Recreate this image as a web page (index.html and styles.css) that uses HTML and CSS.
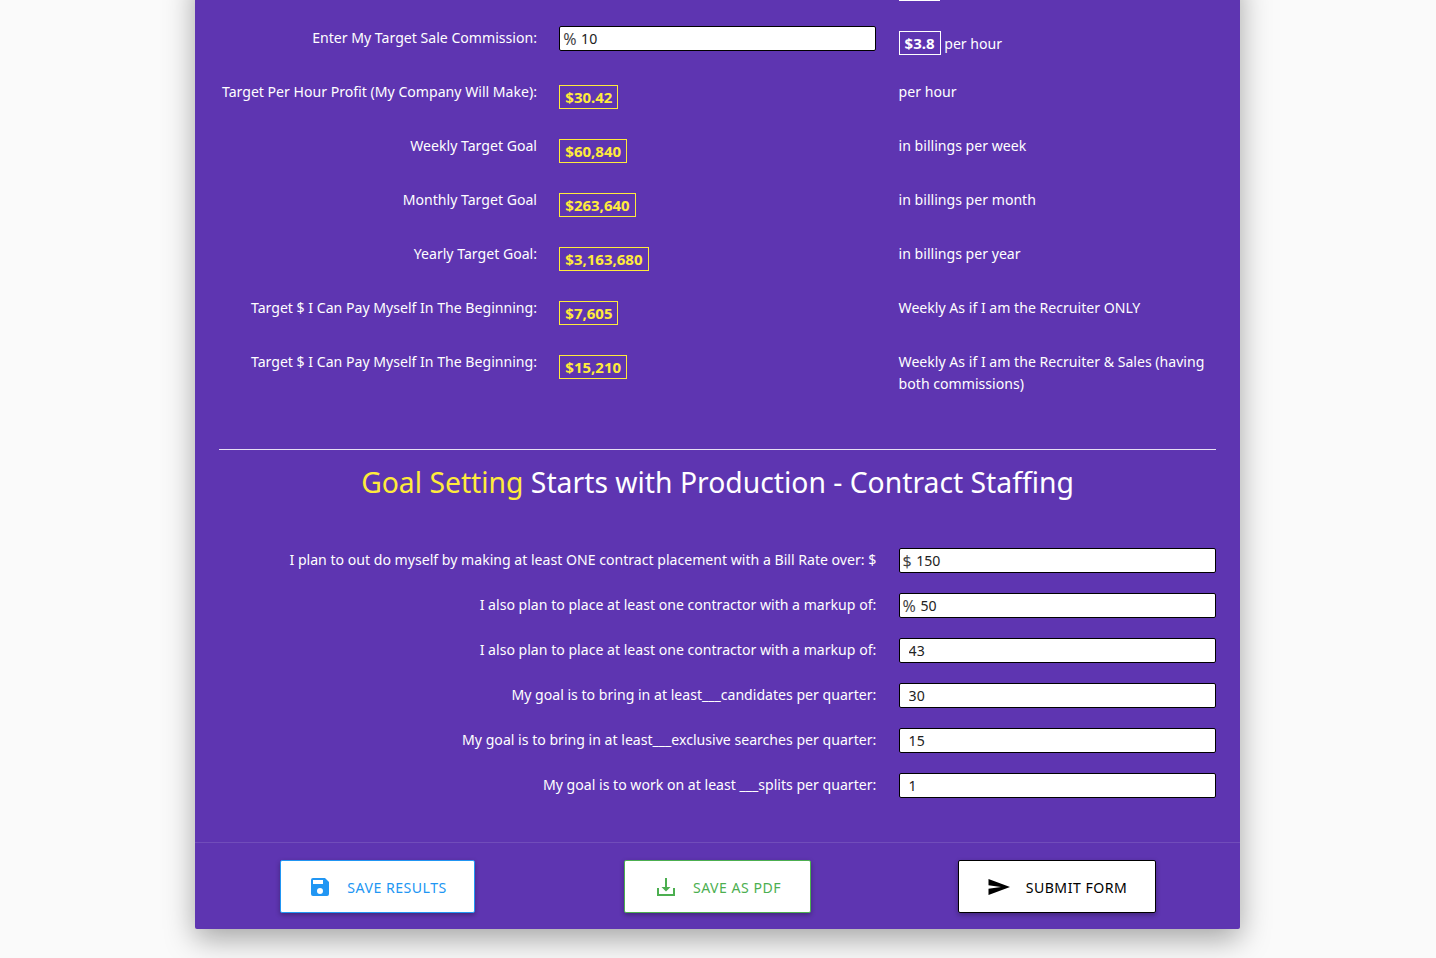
FILE: index.html
```html
<!DOCTYPE html>
<html lang="en">
<head>
    <meta charset="UTF-8">
    <meta name="viewport" content="width=device-width, initial-scale=1.0">
    <title>Goal Setting</title>
    <link rel="stylesheet" href="styles.css">
</head>

<body>
    <div class="card">
        <div class="card-body">
            <div class="grid-row">
                <div class="row-label"></div>
                <div class="row-field"></div>
                <div class="row-note"><span class="value-box white stub"></span></div>
            </div>
            <div class="grid-row">
                <label class="row-label">Enter My Target Sale Commission:</label>
                <div class="input-wrap"><span class="prefix">%</span><input type="text" value="10"></div>
                <div class="row-note"><span class="value-box white">$3.8</span> per hour</div>
            </div>
            <div class="grid-row">
                <label class="row-label">Target Per Hour Profit (My Company Will Make):</label>
                <div class="row-field"><span class="value-box">$30.42</span></div>
                <div class="row-note">per hour</div>
            </div>
            <div class="grid-row">
                <label class="row-label">Weekly Target Goal</label>
                <div class="row-field"><span class="value-box">$60,840</span></div>
                <div class="row-note">in billings per week</div>
            </div>
            <div class="grid-row">
                <label class="row-label">Monthly Target Goal</label>
                <div class="row-field"><span class="value-box">$263,640</span></div>
                <div class="row-note">in billings per month</div>
            </div>
            <div class="grid-row">
                <label class="row-label">Yearly Target Goal:</label>
                <div class="row-field"><span class="value-box">$3,163,680</span></div>
                <div class="row-note">in billings per year</div>
            </div>
            <div class="grid-row">
                <label class="row-label">Target $ I Can Pay Myself In The Beginning:</label>
                <div class="row-field"><span class="value-box">$7,605</span></div>
                <div class="row-note">Weekly As if I am the Recruiter ONLY</div>
            </div>
            <div class="grid-row">
                <label class="row-label">Target $ I Can Pay Myself In The Beginning:</label>
                <div class="row-field"><span class="value-box">$15,210</span></div>
                <div class="row-note">Weekly As if I am the Recruiter &amp; Sales (having both commissions)</div>
            </div>

            <hr class="divider">
            <h2 class="section-title"><span class="accent">Goal Setting</span> Starts with Production - Contract Staffing</h2>

            <div class="goal-rows">
                <div class="goal-row">
                    <label class="goal-label">I plan to out do myself by making at least ONE contract placement with a Bill Rate over: $</label>
                    <div class="input-wrap"><span class="prefix">$</span><input type="text" value="150"></div>
                </div>
                <div class="goal-row">
                    <label class="goal-label">I also plan to place at least one contractor with a markup of:</label>
                    <div class="input-wrap"><span class="prefix">%</span><input type="text" value="50"></div>
                </div>
                <div class="goal-row">
                    <label class="goal-label">I also plan to place at least one contractor with a markup of:</label>
                    <div class="input-wrap no-prefix"><input type="text" value="43"></div>
                </div>
                <div class="goal-row">
                    <label class="goal-label">My goal is to bring in at least___candidates per quarter:</label>
                    <div class="input-wrap no-prefix"><input type="text" value="30"></div>
                </div>
                <div class="goal-row">
                    <label class="goal-label">My goal is to bring in at least___exclusive searches per quarter:</label>
                    <div class="input-wrap no-prefix"><input type="text" value="15"></div>
                </div>
                <div class="goal-row">
                    <label class="goal-label">My goal is to work on at least ___splits per quarter:</label>
                    <div class="input-wrap no-prefix"><input type="text" value="1"></div>
                </div>
            </div>
        </div>

        <div class="card-actions">
            <button class="action-btn blue">
                <svg viewBox="0 0 24 24" width="24" height="24"><path fill="currentColor" d="M17 3H5a2 2 0 0 0-2 2v14a2 2 0 0 0 2 2h14a2 2 0 0 0 2-2V7l-4-4zm-5 16a3 3 0 1 1 0-6 3 3 0 0 1 0 6zm3-10H5V5h10v4z"/></svg>
                <span>Save Results</span>
            </button>
            <button class="action-btn green">
                <svg viewBox="0 0 24 24" width="24" height="24"><path fill="currentColor" d="M11 3h2v9h3.500L12 16.500 7.500 12H11V3zM3 13h2v6h14v-6h2v8H3v-8z"/></svg>
                <span>Save as PDF</span>
            </button>
            <button class="action-btn dark">
                <svg viewBox="0 0 24 24" width="24" height="24"><path fill="currentColor" d="M1.500 4 23 12 1.500 20v-6.200L14 12 1.500 10.200V4z"/></svg>
                <span>Submit Form</span>
            </button>
        </div>
    </div>
</body>
</html>
```
FILE: styles.css
```css
* {
    margin: 0;
    padding: 0;
    box-sizing: border-box;
}

body {
    font-family: 'Noto Sans', 'Open Sans', sans-serif;
    font-size: 14.1px;
    line-height: 22px;
    height: 100vh;
    overflow: hidden;
    display: flex;
    flex-direction: column;
    justify-content: flex-end;
    padding: 0 196px 29px 195px;
    background: #fafafa;
    color: #ffffff;
}

.card {
    flex-shrink: 0;
    background: #5e35b1;
    border-radius: 2px;
    box-shadow: 0 10px 30px rgba(0, 0, 0, 0.35);
}

.card-body {
    padding: 0 24px 44px;
}

.grid-row,
.goal-row {
    display: grid;
    grid-template-columns: 318px 317px 1fr;
    column-gap: 22.3px;
}

.grid-row {
    padding-bottom: 25px;
    align-items: start;
}

.row-label,
.goal-label {
    text-align: right;
}

.row-label,
.row-note {
    padding-top: 1px;
}

.row-field {
    padding-top: 5px;
}

.value-box {
    display: inline-block;
    height: 24px;
    line-height: 22px;
    padding: 0 5px;
    border: 1px solid #ffeb3b;
    color: #ffeb3b;
    font-size: 15px;
    font-weight: 700;
}

.value-box.white {
    border-color: #ffffff;
    color: #ffffff;
    margin-top: 4px;
}

.value-box.stub {
    display: block;
    width: 41px;
}

.input-wrap {
    display: flex;
    align-items: center;
    height: 25px;
    padding-left: 3px;
    background: #ffffff;
    border: 1px solid #000000;
    border-radius: 2px;
}

.input-wrap.no-prefix {
    padding-left: 9px;
}

.prefix {
    color: #444444;
    font-size: 16px;
    margin-right: 4.5px;
}

.input-wrap input {
    flex: 1;
    min-width: 0;
    border: none;
    outline: none;
    background: none;
    font: inherit;
    color: #222222;
}

.divider {
    border: none;
    border-top: 1px solid #e6e0f3;
    margin-top: 29px;
}

.section-title {
    font-size: 28.3px;
    font-weight: 400;
    line-height: 40px;
    text-align: center;
    margin-top: 12px;
    margin-bottom: 46px;
}

.accent {
    color: #ffeb3b;
}

.goal-rows {
    display: flex;
    flex-direction: column;
    gap: 20px;
}

.goal-row {
    align-items: center;
}

.goal-label {
    grid-column: span 2;
    padding-bottom: 2px;
}

.card-actions {
    display: flex;
    justify-content: space-between;
    padding: 17px 84px 16px 85px;
    border-top: 1px solid rgba(255, 255, 255, 0.12);
}

.action-btn {
    display: flex;
    align-items: center;
    justify-content: center;
    gap: 15px;
    height: 53px;
    background: #ffffff;
    border: 1px solid currentColor;
    border-radius: 2px;
    font: inherit;
    text-transform: uppercase;
    letter-spacing: 0.5px;
    box-shadow: 0 2px 5px rgba(0, 0, 0, 0.3);
    cursor: pointer;
}

.action-btn span {
    margin-top: 2px;
}

.blue {
    width: 195px;
    color: #2196f3;
}

.green {
    width: 187px;
    margin-left: 2px;
    color: #4caf50;
}

.dark {
    width: 198px;
    color: #000000;
}
```
